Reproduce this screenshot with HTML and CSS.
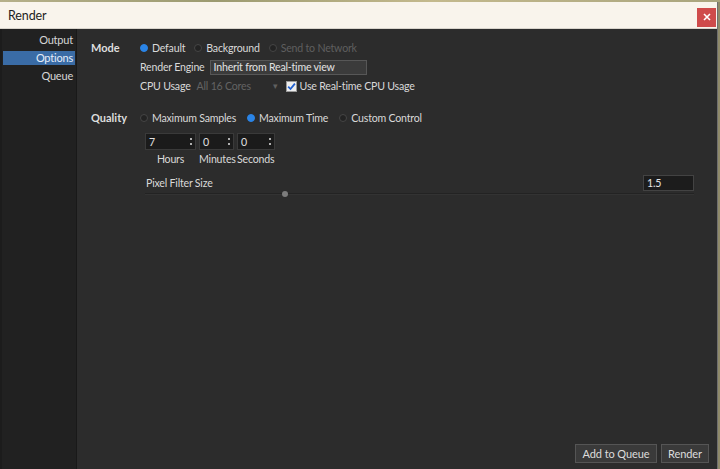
FILE: index.html
```html
<!DOCTYPE html>
<html>
<head>
<meta charset="utf-8">
<link rel="stylesheet" href="styles.css">
</head>
<body>
<div class="desk-strip"></div>
<div class="window">
  <div class="titlebar">
    <span class="title">Render</span>
    <button class="close" aria-label="Close">
      <svg width="8" height="8" viewBox="0 0 8 8"><path d="M1 1L7 7M7 1L1 7" stroke="#fff" stroke-width="1.6"/></svg>
    </button>
  </div>
  <div class="content">
    <nav class="sidebar">
      <div class="nav-item">Output</div>
      <div class="nav-item active">Options</div>
      <div class="nav-item">Queue</div>
    </nav>
    <main class="panel">
      <section class="group mode">
        <div class="group-label">Mode</div>
        <div class="group-body">
          <div class="row radios">
            <label class="radio"><span class="dot on"></span>Default</label>
            <label class="radio"><span class="dot"></span>Background</label>
            <label class="radio disabled"><span class="dot"></span>Send to Network</label>
          </div>
          <div class="row">
            <span class="lbl engine">Render Engine</span>
            <span class="dropdown">Inherit from Real-time view</span>
          </div>
          <div class="row">
            <span class="lbl cpu">CPU Usage</span>
            <span class="combo-disabled">All 16 Cores<span class="caret">▾</span></span>
            <label class="check">
              <svg width="11" height="11" viewBox="0 0 11 11"><rect x="0.5" y="0.5" width="10" height="10" fill="#eeeeee" stroke="#9a9a9a"/><path d="M2.2 5.6L4.5 8L8.9 2.6" fill="none" stroke="#1f5fcf" stroke-width="1.8"/></svg>
              Use Real-time CPU Usage
            </label>
          </div>
        </div>
      </section>

      <section class="group quality">
        <div class="group-label">Quality</div>
        <div class="group-body">
          <div class="row radios">
            <label class="radio"><span class="dot"></span>Maximum Samples</label>
            <label class="radio"><span class="dot on"></span>Maximum Time</label>
            <label class="radio"><span class="dot"></span>Custom Control</label>
          </div>
          <div class="time">
            <div class="time-field hours">
              <div class="spin"><span>7</span><span class="arrows"><i></i><i></i></span></div>
              <div class="time-lbl">Hours</div>
            </div>
            <div class="time-field minutes">
              <div class="spin"><span>0</span><span class="arrows"><i></i><i></i></span></div>
              <div class="time-lbl">Minutes</div>
            </div>
            <div class="time-field seconds">
              <div class="spin"><span>0</span><span class="arrows"><i></i><i></i></span></div>
              <div class="time-lbl">Seconds</div>
            </div>
          </div>
        </div>
      </section>

      <div class="filter">
        <div class="filter-row">
          <span class="lbl">Pixel Filter Size</span>
          <span class="num-input">1.5</span>
        </div>
        <div class="slider"><span class="handle"></span></div>
      </div>

      <div class="actions">
        <button class="btn queue">Add to Queue</button>
        <button class="btn render">Render</button>
      </div>
    </main>
  </div>
</div>
</body>
</html>
```

FILE: styles.css
```css
* { box-sizing: border-box; }
html, body {
  margin: 0;
  padding: 0;
  width: 720px;
  height: 469px;
  overflow: hidden;
  background: #8f8a6a;
  font-family: "Lato", "Segoe UI", sans-serif;
  font-size: 10.6px;
  letter-spacing: -0.2px;
  color: #d9d9d9;
}
.desk-strip {
  height: 2px;
  background: linear-gradient(90deg, #b6b08a, #9c9a70 30%, #c4b98d 60%, #a9a47d);
}
.window {
  width: 718px;
  border-right: 1px solid #6f6f6f;
  display: flex;
  flex-direction: column;
  background: #2c2c2c;
}
.titlebar {
  height: 27px;
  background: #f9f4ec;
  display: flex;
  align-items: center;
  justify-content: space-between;
  padding: 0 1px 0 8px;
  border-bottom: 1px solid #d9d4cc;
}
.title {
  font-size: 12.5px;
  letter-spacing: -0.1px;
  color: #1e1e1e;
  font-family: "Lato", sans-serif;
}
.close {
  width: 19px;
  height: 19px;
  margin-top: 4px;
  border: none;
  padding: 0;
  background: #cf4b4b;
  display: flex;
  align-items: center;
  justify-content: center;
}
.content {
  display: flex;
  height: 440px;
}
.sidebar {
  width: 77px;
  background: #212121;
  border-left: 2px solid #1c1c1c;
  border-right: 1px solid #191919;
  padding: 4px 1px 0 1px;
  display: flex;
  flex-direction: column;
  gap: 4px;
  font-size: 11px;
}
.nav-item {
  height: 14px;
  line-height: 14px;
  text-align: right;
  padding-right: 2px;
  color: #d6d6d6;
}
.nav-item.active {
  background: #3a6ca6;
  color: #e6eefa;
}
.panel {
  flex: 1;
  display: flex;
  flex-direction: column;
  padding: 10px 8px 6px 14px;
}
.group {
  display: grid;
  grid-template-columns: 49px 1fr;
}
.group-label {
  font-weight: bold;
  font-size: 11px;
  color: #dedede;
  height: 18px;
  line-height: 18px;
  letter-spacing: 0;
}
.row {
  display: flex;
  align-items: center;
  height: 18px;
  margin-bottom: 1px;
}
.radios { gap: 9px; }
.radio {
  display: flex;
  align-items: center;
  gap: 4px;
  white-space: nowrap;
}
.radio.disabled { color: #5f5f5f; }
.dot {
  width: 8px;
  height: 8px;
  border-radius: 50%;
  background: #232323;
  border: 1px solid #454545;
}
.dot.on {
  background: #2a84e6;
  border-color: #2a84e6;
}
.lbl { margin-right: 3px; white-space: nowrap; }
.lbl.engine { margin-right: 5px; }
.lbl.cpu { margin-right: 6px; }
.dropdown {
  width: 157px;
  height: 15px;
  line-height: 13px;
  padding-left: 3px;
  background: #3b3b3b;
  border: 1px solid #575757;
  color: #e2e2e2;
  white-space: nowrap;
}
.combo-disabled {
  color: #636363;
  width: 89px;
  display: flex;
  justify-content: space-between;
  white-space: nowrap;
}
.caret { font-size: 9px; color: #606060; margin-right: 8px; }
.check {
  display: flex;
  align-items: center;
  gap: 3px;
  white-space: nowrap;
}
.quality { margin-top: 13px; }
.quality .radios { gap: 11px; }
.time {
  display: flex;
  gap: 3px;
  margin-top: 6px;
  padding-left: 5px;
}
.time-field {
  display: flex;
  flex-direction: column;
  align-items: stretch;
}
.hours { width: 51px; }
.minutes { width: 35px; }
.seconds { width: 38px; }
.spin {
  height: 17px;
  background: #1b1b1b;
  border: 1px solid #3a3a3a;
  display: flex;
  align-items: center;
  justify-content: space-between;
  padding: 0 3px 0 3px;
  color: #e0e0e0;
}
.arrows {
  display: flex;
  flex-direction: column;
  gap: 3px;
}
.arrows i {
  display: block;
  width: 2px;
  height: 2px;
  background: #b0b0b0;
}
.time-lbl {
  text-align: center;
  height: 18px;
  line-height: 18px;
  white-space: nowrap;
}
.minutes .time-lbl, .seconds .time-lbl { text-align: left; }
.filter {
  margin-top: 7px;
  margin-left: 54px;
  width: 549px;
}
.filter-row {
  display: flex;
  justify-content: space-between;
  align-items: center;
  height: 16px;
  padding-left: 1px;
}
.num-input {
  width: 51px;
  height: 16px;
  line-height: 14px;
  padding-left: 3px;
  background: #1c1c1c;
  border: 1px solid #434343;
  color: #e4e4e4;
}
.slider {
  position: relative;
  height: 2px;
  margin-top: 2px;
  background: #232323;
  border-bottom: 1px solid #333;
}
.handle {
  position: absolute;
  left: 137px;
  top: -2px;
  width: 6px;
  height: 6px;
  border-radius: 50%;
  background: #7c7c7c;
}
.actions {
  margin-top: auto;
  display: flex;
  justify-content: flex-end;
  gap: 4px;
}
.btn {
  height: 19px;
  padding: 0;
  background: #3a3a3a;
  border: 1px solid #555;
  color: #dcdcdc;
  font-family: inherit;
  font-size: 11px;
  letter-spacing: -0.1px;
  white-space: nowrap;
}
.btn.queue { width: 82px; }
.btn.render { width: 48px; }
```
